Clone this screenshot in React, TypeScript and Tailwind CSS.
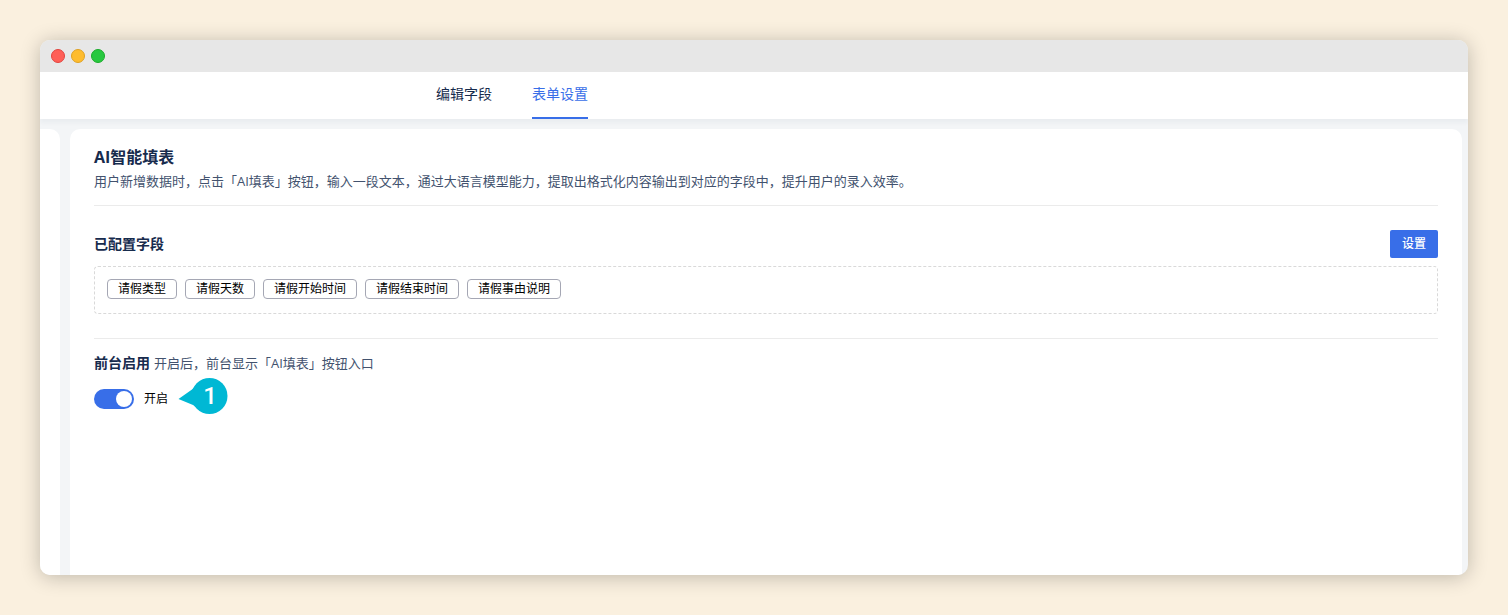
import { useState } from 'react';

const tabs = ['编辑字段', '表单设置'];

const fields = ['请假类型', '请假天数', '请假开始时间', '请假结束时间', '请假事由说明'];

function TitleBar() {
  return (
    <div className="flex h-8 items-center gap-1.5 bg-[#e7e7e7] pl-[11px]">
      <span className="size-3.5 rounded-full border border-[#e0443e] bg-[#ff5f57]" />
      <span className="size-3.5 rounded-full border border-[#dea123] bg-[#febc2e]" />
      <span className="size-3.5 rounded-full border border-[#1aab29] bg-[#28c840]" />
    </div>
  );
}

function StepMarker({ step }: { step: number }) {
  return (
    <span className="absolute -top-[11px] left-full ml-2.5 block h-9 w-[50px]">
      <svg viewBox="0 0 50 36" className="size-full" aria-hidden>
        <circle cx="31.5" cy="18" r="18" fill="#00b8d4" />
        <path d="M0.5 21 L14 11.5 Q17.5 8.5 20 4.5 L31 18 L22 33 Q19 29 15 27Z" fill="#00b8d4" />
      </svg>
      <span className="absolute inset-y-0 right-0 flex w-9 items-center justify-center font-[Roboto,sans-serif] text-2xl leading-9 font-medium text-white">
        {step}
      </span>
    </span>
  );
}

export default function App() {
  const [activeTab, setActiveTab] = useState('表单设置');
  const [enabled, setEnabled] = useState(true);

  return (
    <div className="flex min-h-screen flex-col bg-[#faf0df] p-10 font-['Open_Sans','Noto_Sans_CJK_SC',sans-serif] text-sm text-[#172b4d]">
      <div className="flex flex-1 flex-col overflow-hidden rounded-[10px] bg-[#f3f5f7] shadow-[0_2px_20px_rgba(0,0,0,0.24)]">
        <TitleBar />
        <nav className="flex h-[47px] gap-10 bg-white pl-[396px] shadow-[0_4px_4px_rgba(23,43,77,0.04)]">
          {tabs.map((tab) => (
            <button
              key={tab}
              type="button"
              onClick={() => setActiveTab(tab)}
              className={
                tab === activeTab
                  ? 'border-b-2 border-[#386ee8] pb-0.5 text-[#386ee8]'
                  : 'border-b-2 border-transparent pb-0.5'
              }
            >
              {tab}
            </button>
          ))}
        </nav>

        <div className="flex flex-1 gap-2.5 pt-2.5 pr-1.5">
          <aside className="w-5 rounded-tr-[10px] bg-white" />
          <main className="flex-1 rounded-t-[10px] bg-white px-6 pt-4">
            <header className="border-b border-[#ebebeb] pb-3">
              <h1 className="text-base leading-6 font-bold">AI智能填表</h1>
              <p className="text-[13px] leading-6 text-[#42526e]">
                用户新增数据时，点击「AI填表」按钮，输入一段文本，通过大语言模型能力，提取出格式化内容输出到对应的字段中，提升用户的录入效率。
              </p>
            </header>

            <section className="mt-6">
              <div className="flex items-center justify-between">
                <h2 className="font-bold">已配置字段</h2>
                <button type="button" className="h-7 rounded-xs bg-[#386ee8] px-3 text-xs font-medium text-white">
                  设置
                </button>
              </div>
              <ul className="mt-2 flex min-h-12 flex-wrap items-start gap-2 rounded border border-dashed border-[#d9d9d9] p-3">
                {fields.map((field) => (
                  <li
                    key={field}
                    className="flex h-5 items-center rounded border border-[#a5a7b4] px-2.5 text-xs text-black"
                  >
                    {field}
                  </li>
                ))}
              </ul>
            </section>

            <section className="mt-6 border-t border-[#ebebeb] pt-3">
              <div className="flex items-center gap-1 leading-6">
                <h2 className="font-bold">前台启用</h2>
                <p className="text-[13px] text-[#42526e]">开启后，前台显示「AI填表」按钮入口</p>
              </div>
              <div className="relative mt-3.5 inline-flex h-5 items-center gap-2.5">
                <input
                  id="front-enabled"
                  type="checkbox"
                  role="switch"
                  checked={enabled}
                  onChange={(event) => setEnabled(event.target.checked)}
                  className="flex h-5 w-10 appearance-none items-center rounded-full bg-gray-300 px-0.5 before:size-4 before:rounded-full before:bg-white checked:justify-end checked:bg-[#386ee8]"
                />
                <label htmlFor="front-enabled" className="text-xs text-black">
                  开启
                </label>
                <StepMarker step={1} />
              </div>
            </section>
          </main>
        </div>
      </div>
    </div>
  );
}
